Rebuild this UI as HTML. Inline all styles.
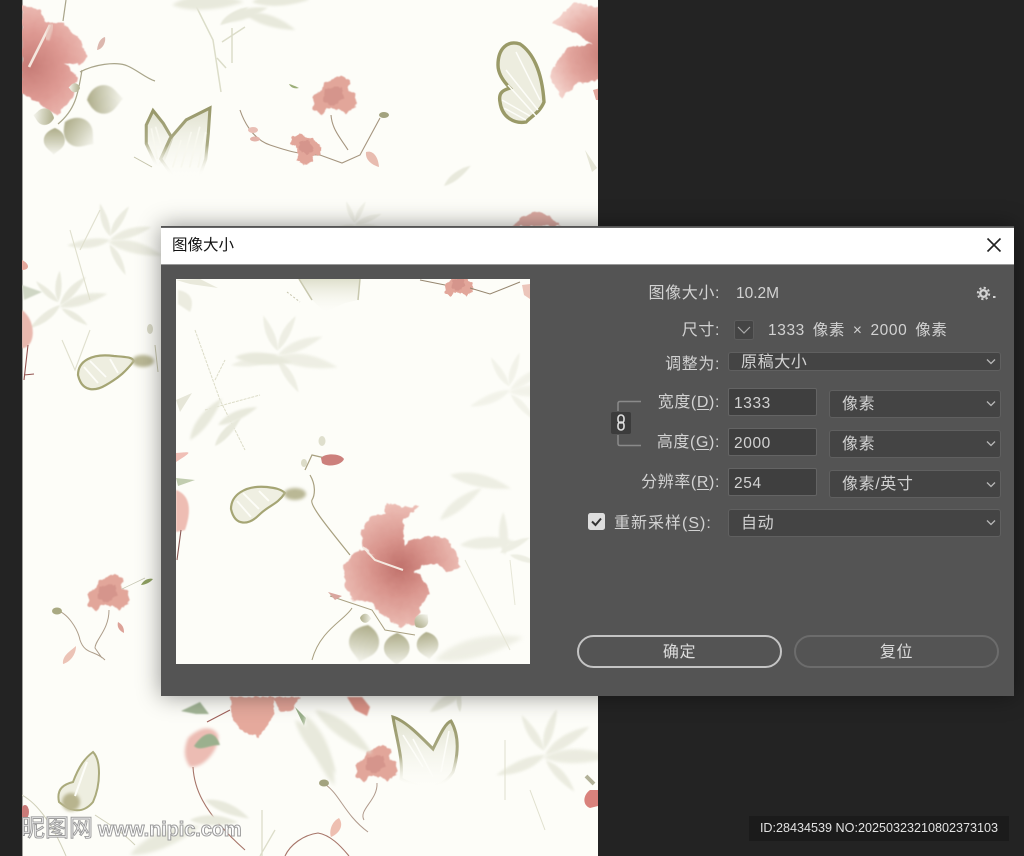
<!DOCTYPE html>
<html><head><meta charset="utf-8">
<style>
html,body{margin:0;padding:0;width:1024px;height:856px;overflow:hidden;background:#232323}
body{position:relative;font-family:"Liberation Sans","Noto Sans CJK SC",sans-serif;color:#d2d2d2}
svg{position:absolute;display:block}
.d{position:absolute;left:161px;top:226px;width:853px;height:470px;background:#545454;box-shadow:0 0 22px rgba(0,0,0,.42);}
.tb{position:absolute;left:161px;top:227px;width:853px;height:38px;background:#fff;border-top:1px solid #666;box-sizing:border-box;border-bottom:1px solid #999}
.t{position:absolute;white-space:nowrap;line-height:20px;font-size:16px;letter-spacing:.6px}
.r{text-align:right;right:304px}
.n{font-size:15.5px;letter-spacing:.6px}
.i{position:absolute;box-sizing:border-box;background:#3f3f3f;border:1px solid #646464;border-radius:2px}
.s{position:absolute;box-sizing:border-box;background:#444;border:1px solid #606060;border-radius:3px}
u{text-underline-offset:2px}
.b{position:absolute;box-sizing:border-box;top:635px;height:33px;border-radius:17px;text-align:center;line-height:32px;font-size:16px;letter-spacing:.6px;color:#ddd}
</style></head><body>

<svg style="left:22px;top:0" width="576" height="856" viewBox="22 0 576 856">
<defs>
<filter id="b1" x="-20%" y="-20%" width="140%" height="140%"><feGaussianBlur stdDeviation="0.7"/></filter>
<filter id="b2" x="-30%" y="-30%" width="160%" height="160%"><feGaussianBlur stdDeviation="1.6"/></filter>
<filter id="b3" x="-30%" y="-30%" width="160%" height="160%"><feGaussianBlur stdDeviation="1.1"/></filter>
<filter id="rh" x="-10%" y="-10%" width="120%" height="120%"><feTurbulence type="fractalNoise" baseFrequency=".05" numOctaves="2" seed="4"/><feDisplacementMap in="SourceGraphic" scale="18" xChannelSelector="R" yChannelSelector="G"/><feGaussianBlur stdDeviation="1.8"/></filter>
<filter id="rp" x="-10%" y="-10%" width="120%" height="120%"><feTurbulence type="fractalNoise" baseFrequency=".16" numOctaves="2" seed="7"/><feDisplacementMap in="SourceGraphic" scale="5" xChannelSelector="R" yChannelSelector="G"/><feGaussianBlur stdDeviation=".5"/></filter>
<radialGradient id="hg" gradientUnits="userSpaceOnUse" cx="690" cy="350" r="190"><stop offset="0" stop-color="#bf706a"/><stop offset=".45" stop-color="#d9958d"/><stop offset="1" stop-color="#edbfb6"/></radialGradient>
<radialGradient id="h2" gradientUnits="userSpaceOnUse" cx="30" cy="66" r="68"><stop offset="0" stop-color="#c67c76"/><stop offset=".5" stop-color="#de9a93"/><stop offset="1" stop-color="#efc2ba"/></radialGradient>
<radialGradient id="h3" gradientUnits="userSpaceOnUse" cx="605" cy="55" r="58"><stop offset="0" stop-color="#c97e77"/><stop offset=".6" stop-color="#e2a59d"/><stop offset="1" stop-color="#f3d0c9"/></radialGradient>
<linearGradient id="bs" x1="0" y1="0" x2="0" y2="1"><stop offset="0" stop-color="#98986a"/><stop offset=".55" stop-color="#aaaa84"/><stop offset="1" stop-color="#fdfdf8" stop-opacity="0"/></linearGradient>
<linearGradient id="bf" x1="0" y1="0" x2="0" y2="1"><stop offset="0" stop-color="#dedfcc"/><stop offset="1" stop-color="#fdfdf8" stop-opacity=".2"/></linearGradient>
<linearGradient id="lf" x1="0" y1="1" x2="0" y2="0"><stop offset="0" stop-color="#aead8a"/><stop offset=".55" stop-color="#d3d3be"/><stop offset="1" stop-color="#f5f5ee"/></linearGradient>
<g id="hib" filter="url(#rh)">
<g fill="url(#hg)">
<path d="M575 240L600 200 645 190 650 158 700 170 748 165 700 210 700 250 715 320 690 365 640 340 575 285Z"/>
<path d="M700 300L720 270 790 255 830 265 860 310 867 352 840 367 800 340 760 345 720 372 680 355Z"/>
<path d="M522 345L570 295 620 320 700 350 670 400 600 450 550 450 525 410Z"/>
<path d="M600 450L650 375 700 350 750 372 780 430 750 470 735 522 690 527 630 490Z"/>
</g>
</g>
<g id="sm" filter="url(#rp)">
<path d="M-22 -3L-12 -10-9-18 0-22 8-26 18-20 16-10 24-6 24 8 14 14 6 10-6 8-12 16-20 10Z" fill="#e2a69a"/>
<path d="M-8-12L8-14 12-2 0 6-10 2Z" fill="#d08f86" opacity=".7"/>
</g>
<g id="bfly">
<path d="M5 20L13 3 25 18 35 35 26 60 18 70 5 42Z" fill="url(#bf)" stroke="url(#bs)" stroke-width="3.600"/>
<path d="M33 36L52 14 80 0 78 30 75 60 68 80 36 80 22 60Z" fill="url(#bf)" stroke="url(#bs)" stroke-width="3.600"/>
<path d="M36 70L46 38M46 70L58 28M56 70L68 22M66 70L75 28M18 60L11 24M24 50L16 22" stroke="#f8f8ef" stroke-width="2" fill="none"/>
</g>
<g id="lv"><path d="M0 0C12-8 30-9 48-2 30 4 12 5 0 0Z" fill="#e8e9dc" filter="url(#b3)"/></g>
<g id="gl"><path d="M0 0C-16-6-18-22-8-30-3-34 0-36 2-38 6-32 16-28 16-18 16-8 8-3 0 0Z" fill="url(#lf)" filter="url(#b1)"/></g>
<g id="bam">
<use href="#lv" transform="rotate(-20)"/><use href="#lv" transform="translate(-2 2) rotate(12) scale(1.3)"/><use href="#lv" transform="translate(0 -5) rotate(-60) scale(.8)"/><use href="#lv" transform="translate(0 -4) rotate(-110) scale(.8)"/><use href="#lv" transform="rotate(170)"/><use href="#lv" transform="translate(0 5) rotate(60) scale(.8)"/>
</g>
</defs>
<rect x="22" y="0" width="576" height="856" fill="#fdfdf8"/>
<rect x="22" y="0" width="1" height="856" fill="#a2a29e"/>
<!-- top-left -->
<path d="M66 0L63 21M80 72C95 64 115 62 125 65S145 78 155 81M82 70C78 95 75 110 58 124" stroke="#a9a58a" stroke-width="1.200" fill="none"/>
<path d="M22 5L40 10 47 23 63 23 80 40 88 57 80 65 65 63 77 77 73 97 57 115 37 103 22 93Z" fill="url(#h2)" filter="url(#rp)"/>
<path d="M29 67L50 25" stroke="#f4e7de" stroke-width="2.600"/><path d="M47 40L52 24" stroke="#e9c9c0" stroke-width="5" opacity=".8" filter="url(#b1)"/>
<path d="M97 50C98 42 101 38 105 37 106 42 103 49 97 50Z" fill="#dcb7ae"/>
<use href="#gl" transform="translate(87 100) rotate(85) scale(.95)"/><use href="#gl" transform="translate(65 122) rotate(125) scale(.95)"/><use href="#gl" transform="translate(55 128) rotate(180) scale(.7)"/><use href="#gl" transform="translate(54 118) rotate(-85) scale(.55)"/><use href="#gl" transform="translate(80 88) rotate(-90) scale(.3)"/>
<!-- top stems -->
<path d="M196 6L213 40 221 92M232 28V63M245 27L222 42M217 58L226 68" stroke="#dcddc9" stroke-width="1.500" fill="none"/>
<use href="#lv" transform="translate(172 5) scale(1.500)"/><use href="#lv" transform="translate(222 22) rotate(-15)"/><use href="#lv" transform="translate(245 14) rotate(20) scale(1.100)"/><use href="#lv" transform="translate(252 2) scale(1.200)"/><use href="#lv" transform="translate(220 25) rotate(-30) scale(.7)"/>
<use href="#bfly" transform="translate(142 108) scale(.85)"/>
<path d="M134 157L152 167" stroke="#c3c2a8" stroke-width="1"/>
<!-- small flowers group -->
<path d="M240 110C245 125 255 140 270 145S300 155 320 155L342 163 360 155 380 118M331 115C332 130 342 140 348 150" stroke="#a5957f" stroke-width="1.100" fill="none"/>
<use href="#sm" transform="translate(333 100) scale(.95)"/><use href="#sm" transform="translate(303 148) rotate(70) scale(.68)"/>
<path d="M366 152C372 150 378 155 379 167 372 165 365 160 366 152Z" fill="#e8bcb0"/><path d="M289 84C293 85 297 87 299 88 295 89 291 88 289 84Z" fill="#9cae78"/><ellipse cx="384" cy="115" rx="5" ry="3" fill="#a3a37f"/>
<ellipse cx="253" cy="130" rx="5" ry="3" fill="#e9bfb5"/><ellipse cx="255" cy="139" rx="5" ry="2.500" fill="#e3b3a9"/>
<!-- butterfly right + flower -->
<g transform="translate(490 40)">
<path d="M8 25C8 8 18 0 30 4 42 12 52 30 54 62 50 72 42 76 36 82 25 84 12 78 10 62 8 52 14 50 20 48 12 40 8 32 8 25Z" fill="#ededdf" stroke="#9a9a68" stroke-width="3.400"/>
<path d="M16 30L48 70M18 45L46 76M26 12L50 60M12 60L40 76M14 68L36 80" stroke="#fdfdf8" stroke-width="1.500"/>
</g>
<path d="M552 23L575 3 600 8 600 50 580 35Z" fill="url(#h3)" filter="url(#rp)"/>
<path d="M550 73L567 48 600 42 600 80 577 83 562 98 555 87Z" fill="url(#h3)" filter="url(#rp)"/>
<path d="M593 90L600 88V100L596 100Z" fill="#e2a69c"/>
<path d="M513 226C520 218 530 212 537 212 548 214 556 220 560 226Z" fill="#dcaaa2" filter="url(#rp)"/>
<!-- mid -->
<use href="#bam" transform="translate(110 240) rotate(5) scale(.9)" opacity=".85"/>
<use href="#bam" transform="translate(60 305) rotate(-25) scale(.8)" opacity=".9"/>
<path d="M70 230L90 300M62 340L75 370 90 330M80 250L100 210" stroke="#e0e0ce" stroke-width="1.100" fill="none"/>
<path d="M22 260C30 264 30 270 22 270Z" fill="#e6a89c"/><path d="M22 310C36 320 36 345 24 348L22 348Z" fill="#e9b8ae" filter="url(#b1)"/><path d="M28 345L24 380M24 375L34 374" stroke="#92524f" stroke-width="1.100" fill="none"/>
<path d="M22 285L42 292 24 300Z" fill="#cfd6c4" filter="url(#b1)"/>
<g transform="translate(76 353)">
<path d="M2 22C2 8 16 0 38 3 50 4 56 4 58 8 50 18 44 24 30 32 20 38 6 40 2 22Z" fill="#eeeee0" stroke="#a5a574" stroke-width="2.200"/>
<path d="M8 14L22 30M14 8L30 24M34 6L42 20" stroke="#fdfdf8" stroke-width="1.800"/></g>
<ellipse cx="143" cy="361" rx="11" ry="6" fill="#bab895" filter="url(#b2)"/>
<path d="M155 345L158 372" stroke="#c8c7ae" stroke-width="1"/>
<ellipse cx="150" cy="329" rx="3" ry="5" fill="#d8d8c6"/>
<!-- lower-left flower -->
<path d="M109 610C109 630 95 640 95 648L102 658M55 610C68 612 78 630 80 640 85 655 95 650 105 660" stroke="#ad9d8a" stroke-width="1" fill="none"/>
<use href="#sm" transform="translate(107 597) scale(.9)"/>
<ellipse cx="57" cy="611" rx="5" ry="3.500" fill="#a9a982"/><path d="M153 579C150 583 144 585 141 585 144 579 150 578 153 579Z" fill="#8fa062"/>
<path d="M76 646C72 650 62 655 63 664 70 662 76 655 76 646Z" fill="#ecc3b6"/><path d="M118 622C123 625 124 628 124 633 118 630 117 626 118 622Z" fill="#dda298"/>
<path d="M122 589L145 578" stroke="#c4c4b0" stroke-width=".7"/>
<!-- below dialog -->
<path d="M230 697L274 697 274 712 268 725 258 737 240 730 232 715Z" fill="#e5a99c" filter="url(#rp)"/><path d="M272 697L300 697 292 710 280 712Z" fill="#e0a296" filter="url(#rp)"/>
<path d="M347 697L362 697 370 707 367 716 355 710Z" fill="#dd9488" filter="url(#b1)"/>
<path d="M230 710L207 722" stroke="#a0605a" stroke-width="1.100"/>
<path d="M188 738C198 728 212 724 218 735 220 748 205 768 190 767 183 757 184 748 188 738Z" fill="#ecbcb3" filter="url(#b2)"/><path d="M194 746C205 730 215 730 220 745 208 745 200 752 194 746Z" fill="#9bb08e" filter="url(#b1)"/>
<path d="M181 711L200 702 209 714 196 714Z" fill="#a3b596" filter="url(#b1)"/>
<path d="M295 707L306 718 304 726Z" fill="#9ab08a"/>
<path d="M193 767C194 785 200 810 245 850M285 856C290 845 303 835 318 833 330 835 340 845 349 856" stroke="#a67468" stroke-width="1.100" fill="none"/>
<g transform="translate(391 717)">
<path d="M2 0C15 4 30 20 42 32 48 20 54 6 60 4 68 18 68 35 62 55 50 74 30 72 10 62 12 40 6 25 2 0Z" fill="url(#bf)" stroke="url(#bs)" stroke-width="3"/>
<path d="M12 18L32 50M22 22L42 60M58 14L50 55" stroke="#fdfdf8" stroke-width="1.600"/></g>
<use href="#sm" transform="translate(375 768) scale(.9)"/>
<path d="M377 783C378 800 358 810 364 820M326 785C340 795 345 815 368 832" stroke="#b09a8c" stroke-width="1" fill="none"/>
<ellipse cx="324" cy="783" rx="5" ry="3.500" fill="#a3a37f"/><path d="M339 818C331 822 329 832 331 837 340 833 344 825 339 818Z" fill="#eebfb1"/>
<g transform="translate(57 752)">
<path d="M36 0C44 8 44 32 36 50 26 62 14 60 2 50-1 36 8 32 16 30 22 14 28 6 36 0Z" fill="#eeeee0" stroke="#aaaa7c" stroke-width="2"/>
<ellipse cx="14" cy="50" rx="9" ry="9" fill="#b8b48e" filter="url(#b2)"/><path d="M18 44L30 10" stroke="#fdfdf8" stroke-width="2"/></g>
<path d="M22 795C40 805 55 830 66 856M95 815C110 825 120 830 135 845" stroke="#cfcfb8" stroke-width="1" fill="none"/>
<ellipse cx="25" cy="812" rx="4" ry="7" fill="#c87a78"/>
<use href="#bam" transform="translate(545 755) rotate(-10) scale(1.100)" opacity=".85"/>
<use href="#lv" transform="translate(295 720) rotate(55) scale(1.400)"/><use href="#lv" transform="translate(305 715) rotate(70) scale(1.600)"/><use href="#lv" transform="translate(315 710) rotate(40) scale(1.500)"/>
<use href="#lv" transform="translate(430 712) rotate(-30)"/><use href="#lv" transform="translate(460 712) rotate(-90) scale(.5)"/>
<path d="M505 740V800M530 790L545 830" stroke="#e0e0ce" stroke-width="1" fill="none"/>
<use href="#lv" transform="translate(130 855) rotate(-20) scale(1.600)"/><use href="#lv" transform="translate(190 820) rotate(5) scale(1)"/><use href="#lv" transform="translate(205 800) rotate(25) scale(1)"/>
<path d="M590 790C583 795 582 805 590 808L598 806V790Z" fill="#d9827c"/>
<path d="M586 776L594 784" stroke="#b2b198" stroke-width="4"/>
<path d="M262 810V856M275 830L260 856" stroke="#dcddc9" stroke-width="1.300"/>
<use href="#lv" transform="translate(444 186) rotate(-35) scale(.7)"/><use href="#bam" transform="translate(355 225) scale(.6)" opacity=".55"/>
<path d="M597 168L585 150 592 172Z" fill="#e6e6d6"/>
</svg>

<div style="position:absolute;left:22px;top:814px;width:230px;height:30px;overflow:hidden;font-weight:bold;color:rgba(255,255,255,.88);-webkit-text-stroke:1px #9c9c9c;white-space:nowrap">
<span style="position:absolute;left:-1px;top:1px;font-size:24px;line-height:28px;font-weight:normal">昵图网</span>
<span style="position:absolute;left:76px;top:3px;font-size:20px;line-height:26px;letter-spacing:-.1px">www.nipic.com</span>
</div>

<div class="d"></div>
<div class="tb"></div>
<div class="t" style="left:172px;top:236px;color:#111;font-size:15.5px;letter-spacing:0">图像大小</div>
<svg style="left:986px;top:237px" width="16" height="16"><path d="M1.500 1.500L14.500 14.500M14.500 1.500L1.500 14.500" stroke="#222" stroke-width="1.600"/></svg>

<svg style="left:176px;top:279px" width="354" height="385" viewBox="176 279 354 385">
<rect x="176" y="279" width="354" height="385" fill="#fdfdf8"/>
<!-- top butterfly -->
<path d="M299 279L312 300 325 312 345 303 358 300 360 279Z" fill="url(#bf)"/>
<path d="M299 279L312 300M360 279L358 300" stroke="#c8c8ae" stroke-width="1.500"/>
<path d="M287 292L300 302" stroke="#c6c4ac" stroke-width="1" stroke-dasharray="2 2"/>
<use href="#sm" transform="translate(458 287) scale(.62)"/>
<path d="M420 280L445 285M470 288L490 294 520 282" stroke="#96866f" stroke-width="1" fill="none"/>
<path d="M522 285L530 284V299L524 295Z" fill="#ecc5ba"/>
<path d="M176 280L200 279 218 288 190 284Z" fill="#e9e9db"/>
<path d="M178 290C190 292 195 300 190 312L178 304Z" fill="#ecece0" filter="url(#b1)"/>
<!-- leaves left -->
<use href="#bam" transform="translate(278 355) scale(1)" opacity=".7"/>
<use href="#lv" transform="translate(235 357) rotate(8) scale(1.200)"/>
<path d="M195 330L220 400 245 450M205 410L260 395M215 380L225 360" stroke="#dcdcc8" stroke-width="1" stroke-dasharray="3 1" fill="none"/>
<path d="M176 400L192 393 180 412Z" fill="#e6e6d8"/>
<path d="M176 453C190 452 195 450 176 462Z" fill="#f0bfb6"/>
<path d="M176 478L195 480 178 486Z" fill="#c2cdb0"/>
<use href="#lv" transform="translate(218 425) rotate(-22) scale(.9)"/><use href="#lv" transform="translate(190 440) rotate(-50) scale(1.100)"/><use href="#lv" transform="translate(215 446) rotate(-45) scale(.8)"/>
<path d="M176 490C190 495 192 510 185 530L176 532Z" fill="#eebdb3" filter="url(#b1)"/>
<path d="M181 530L177 560" stroke="#8a5a55" stroke-width="1.100"/>
<!-- right leaves faded -->
<use href="#bam" transform="translate(510 390) rotate(-10) scale(.9)" opacity=".5"/>
<!-- bud + butterfly -->
<path d="M305 470L312 455 325 458M310 475C316 485 315 495 312 500S330 530 350 555" stroke="#a8a080" stroke-width="1.200" fill="none"/>
<path d="M321 458C325 453 340 453 344 459 342 465 328 468 322 463Z" fill="#cc807c"/>
<ellipse cx="322" cy="441" rx="3.500" ry="5" fill="#dfdfcd"/><ellipse cx="304" cy="463" rx="3" ry="4" fill="#dcdcc8"/>
<g transform="translate(229 487)">
<path d="M2 22C2 8 16-2 38 0 46 1 52 2 56 6 48 18 40 18 30 28 20 38 6 40 2 22Z" fill="#efefe2" stroke="#a5a574" stroke-width="2.200"/>
<path d="M8 14L22 30M14 6L30 22M30 4L40 14" stroke="#fdfdf8" stroke-width="1.800"/></g>
<ellipse cx="295" cy="494" rx="11" ry="6" fill="#bab895" filter="url(#b2)"/>
<use href="#hib" transform="translate(400 567) scale(.333) translate(-690 -350)"/>
<path d="M363 547L375 560 403 570" stroke="#f5e9e0" stroke-width="2" fill="none"/>
<!-- bottom leaves -->
<path d="M352 608C345 620 320 630 312 660M330 596L372 610 385 630 415 635" stroke="#a89f80" stroke-width="1" fill="none"/>
<path d="M328 592L342 596 335 600Z" fill="#d9a69e"/>
<use href="#gl" transform="translate(368 625) rotate(190)"/><use href="#gl" transform="translate(397 633) rotate(178) scale(.85)"/><use href="#gl" transform="translate(426 632) rotate(170) scale(.72)"/><use href="#gl" transform="translate(416 627) rotate(40) scale(.45)"/><use href="#gl" transform="translate(360 618) rotate(90) scale(.3)"/>
<!-- right bamboo -->
<g opacity=".75"><use href="#lv" transform="translate(440 520) rotate(-35) scale(1.100)"/><use href="#lv" transform="translate(460 545) scale(1.200)"/><use href="#lv" transform="translate(500 553) rotate(-25) scale(.7)"/><use href="#lv" transform="translate(505 555) rotate(-90) scale(.9)"/><use href="#lv" transform="translate(510 555) rotate(20) scale(.6)"/><use href="#lv" transform="translate(450 475) rotate(15) scale(1.300)"/></g>
<use href="#lv" transform="translate(435 660) rotate(-12) scale(1.900)" opacity=".7"/>
<path d="M465 560L495 620 510 650M510 560L515 605" stroke="#e6e6d6" stroke-width="1" fill="none"/>
</svg>

<!-- form -->
<div class="t r" style="top:284px">图像大小:</div>
<div class="t n" style="left:736px;top:284px;letter-spacing:0">10.2M</div>
<svg style="left:976px;top:286px" width="22" height="16"><circle cx="7.500" cy="7.500" r="3.300" fill="none" stroke="#d4d4d4" stroke-width="2.400"/><circle cx="7.500" cy="7.500" r="5.700" fill="none" stroke="#d4d4d4" stroke-width="2" stroke-dasharray="2.200 2.270"/><rect x="17" y="10" width="2.500" height="2" fill="#d4d4d4"/></svg>

<div class="t r" style="top:321px">尺寸:</div>
<svg style="left:734px;top:320px" width="20" height="20"><rect x=".5" y=".5" width="19" height="19" rx="2" fill="#454545" stroke="#5d5d5d"/><path d="M4 7L10 13 16 7" fill="none" stroke="#aaa" stroke-width="1.200"/></svg>
<div class="t n" style="left:768px;top:321px;word-spacing:3px">1333 像素 × 2000 像素</div>

<div class="t r" style="top:355px">调整为:</div>
<div class="s" style="left:728px;top:352px;width:273px;height:19px"></div>
<div class="t" style="left:741px;top:353px">原稿大小</div>

<svg style="left:611px;top:400px" width="32" height="47"><path d="M30 1.500H9Q7 1.500 7 3.500V11M30 45.500H9Q7 45.500 7 43.500V35" fill="none" stroke="#8a8a8a" stroke-width="1.500"/><rect x="0" y="12" width="20" height="22" rx="2" fill="#3c3c3c"/><rect x="7" y="15" width="6" height="8" rx="3" fill="none" stroke="#e0e0e0" stroke-width="1.600"/><rect x="7" y="22" width="6" height="8" rx="3" fill="none" stroke="#e0e0e0" stroke-width="1.600"/></svg>

<div class="t r" style="top:393px">宽度(<u>D</u>):</div>
<div class="i" style="left:728px;top:388px;width:89px;height:28px"></div>
<div class="t n" style="left:734px;top:394px">1333</div>
<div class="s" style="left:829px;top:390px;width:172px;height:28px"></div>
<div class="t" style="left:842px;top:395px">像素</div>

<div class="t r" style="top:433px">高度(<u>G</u>):</div>
<div class="i" style="left:728px;top:428px;width:89px;height:28px"></div>
<div class="t n" style="left:734px;top:434px">2000</div>
<div class="s" style="left:829px;top:430px;width:172px;height:28px"></div>
<div class="t" style="left:842px;top:435px">像素</div>

<div class="t r" style="top:473px">分辨率(<u>R</u>):</div>
<div class="i" style="left:728px;top:468px;width:89px;height:28px"></div>
<div class="t n" style="left:734px;top:474px">254</div>
<div class="s" style="left:829px;top:470px;width:172px;height:28px"></div>
<div class="t" style="left:842px;top:475px">像素/英寸</div>

<svg style="left:588px;top:513px" width="17" height="17"><rect width="17" height="17" rx="2.500" fill="#dedede"/><path d="M4 8.500L7.500 12 13 5.500" fill="none" stroke="#333" stroke-width="2"/></svg>
<div class="t" style="left:614px;top:514px;letter-spacing:1px">重新采样(<u>S</u>):</div>
<div class="s" style="left:728px;top:509px;width:273px;height:28px"></div>
<div class="t" style="left:741px;top:514px">自动</div>

<svg style="left:985px;top:355px" width="12" height="180" fill="none" stroke="#b8b8b8" stroke-width="1.300"><path d="M2 4.500L6 8.500 10 4.500M2 46.500L6 50.500 10 46.500M2 86.500L6 90.500 10 86.500M2 127.500L6 131.500 10 127.500M2 165.500L6 169.500 10 165.500"/></svg>

<div class="b" style="left:577px;width:205px;border:2px solid #c4c4c4">确定</div>
<div class="b" style="left:794px;width:205px;border:2px solid #6c6c6c">复位</div>

<div style="position:absolute;left:749px;top:816px;width:260px;height:25px;background:#1b1b1b;color:#e2e2e2;font-size:12.6px;line-height:25px;text-align:center;white-space:nowrap">ID:28434539 NO:20250323210802373103</div>
</body></html>
